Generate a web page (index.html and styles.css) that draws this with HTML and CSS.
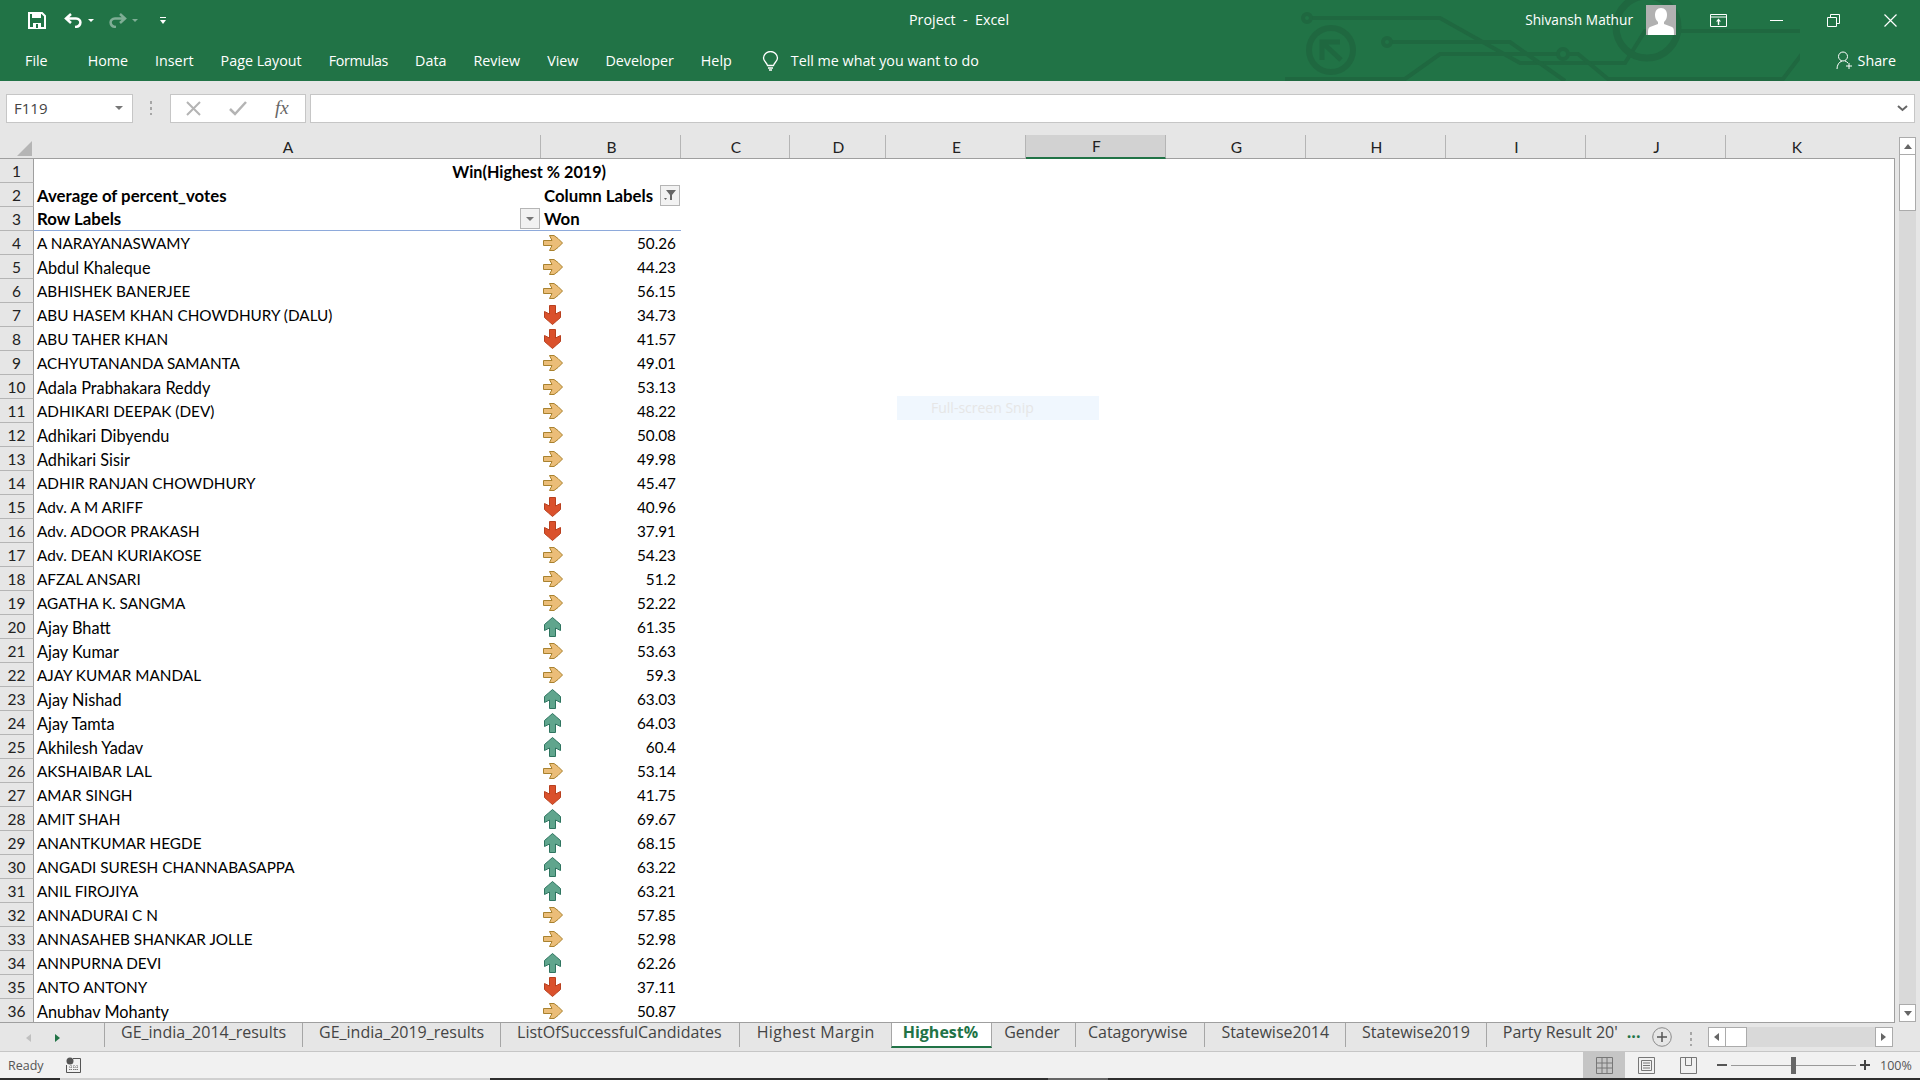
FILE: index.html
```html
<!DOCTYPE html>
<html lang="en">
<head>
    <meta charset="UTF-8">
    <title>Project - Excel</title>
    <link rel="stylesheet" href="styles.css">
</head>
<body>

<svg class="defs" width="0" height="0">
    <symbol id="arrowSide" viewBox="0 0 20 16">
        <path d="M.5 5.500H9L6.500 .5H11L15 3.500 19.500 8 15 12.500 11 15.500H6.500L9 10.500H.5z" fill="#ebbd78" stroke="#a9822f"/>
    </symbol>
    <symbol id="arrowDown" viewBox="0 0 17 20">
        <path d="M5.500 .5h6V9l5-2.500v6l-4 3.500-4 3.500-4-3.500-4-3.500v-6l5 2.500z" fill="#da512c" stroke="#b8401f"/>
    </symbol>
    <symbol id="arrowUp" viewBox="0 0 17 20">
        <path d="M5.500 19.500h6V11l5 2.500v-6l-4-3.500-4-3.500-4 3.500-4 3.500v6l5-2.500z" fill="#60a58d" stroke="#2f7560"/>
    </symbol>
</svg>

<header class="titlebar">
    <svg class="circuit" width="520" height="81" viewBox="1280 0 520 81" fill="none" stroke="#1f6840" stroke-width="4">
        <path d="M1310 18h130l80 45h105l20-32h155"/>
        <circle cx="1307" cy="18" r="4"/>
        <path d="M1390 42h120l55 39"/>
        <circle cx="1387" cy="42" r="4"/>
        <path d="M1560 54h-120l-35 25h-120"/>
        <circle cx="1563" cy="54" r="5"/>
        <path d="M1568 54h10l30 25h175l60-79"/>
        <circle cx="1331" cy="50" r="22" stroke-width="6"/>
        <path d="M1322 60V42h18M1323 43l18 17" stroke-width="5"/>
        <circle cx="1647" cy="27" r="31" stroke-width="7"/>
    </svg>
    <div class="titleRow">
        <div class="qat">
            <svg class="qatSave" width="18" height="17" viewBox="0 0 18 17"><path d="M1 1h13l3 3v12H1z" fill="none" stroke="#fff" stroke-width="2"/><path d="M4 1h9v5H4zM5 11h8v5H5z" fill="#fff"/><path d="M8 12h2v4H8z" fill="#217346"/></svg>
            <svg class="qatUndo" width="19" height="15" viewBox="0 0 19 15"><path d="M7 1L2 5.500 7 10M2 5.500h10c6 0 6 8-1 8.500" fill="none" stroke="#fff" stroke-width="2.500"/></svg>
            <span class="caret"></span>
            <svg class="qatRedo" width="19" height="15" viewBox="0 0 19 15"><path d="M12 1l5 4.500L12 10M17 5.500H7c-6 0-6 8 1 8.500" fill="none" stroke="#7fae95" stroke-width="2.500"/></svg>
            <span class="caret dim"></span>
            <svg class="qatMore" width="8" height="9" viewBox="0 0 8 9"><path d="M1 1h6v1H1zM1 4h6L4 8z" fill="#fff"/></svg>
        </div>
        <div class="docTitle">Project &nbsp;-&nbsp; Excel</div>
        <div class="account">
            <span class="userName">Shivansh Mathur</span>
            <svg class="avatar" width="30" height="30" viewBox="0 0 30 30"><path d="M0 0h30v30H0z" fill="#b1b1b1"/><path d="M15 3c4 0 6 3 6 7 0 3-1 5-3 7v2l8 3c2 1 2 3 2 8H2c0-5 0-7 2-8l8-3v-2c-2-2-3-4-3-7 0-4 2-7 6-7z" fill="#fff"/></svg>
            <svg class="winBtn winRibbon" width="17" height="13" viewBox="0 0 17 13"><path d="M.500.500h16v12H.500zM.500 3h16" fill="none" stroke="#fff"/><path d="M8.500 4.500L11 7.500H9.200V11H7.800V7.500H6z" fill="#fff"/></svg>
            <svg class="winBtn winMin" width="13" height="1" viewBox="0 0 13 1"><path d="M0 0h13v1H0z" fill="#fff"/></svg>
            <svg class="winBtn winRestore" width="13" height="13" viewBox="0 0 13 13"><path d="M.500 3.500h9v9h-9zM3.500 3.500v-3h9v9h-3" fill="none" stroke="#fff"/></svg>
            <svg class="winBtn winClose" width="13" height="13" viewBox="0 0 13 13"><path d="M.500.500l12 12M12.500.500l-12 12" fill="none" stroke="#fff" stroke-width="1.200"/></svg>
        </div>
    </div>
    <nav class="ribbonTabs">
        <span class="tabFile">File</span>
        <span>Home</span>
        <span>Insert</span>
        <span>Page Layout</span>
        <span class="tabFormulas">Formulas</span>
        <span>Data</span>
        <span>Review</span>
        <span>View</span>
        <span>Developer</span>
        <span>Help</span>
        <svg class="bulb" width="17" height="20" viewBox="0 0 17 20"><path d="M5.500 14.500C5 11.500 1.500 10.500 1.500 7a7 6.500 0 0 1 14 0c0 3.500-3.500 4.500-4 7.500zM6 17h5M7 19h3" fill="none" stroke="#fff" stroke-width="1.300"/></svg>
        <span class="tellMe">Tell me what you want to do</span>
        <span class="share">
            <svg width="17" height="19" viewBox="0 0 17 19"><path d="M7 1a4.500 4.500 0 0 1 0 9 4.500 4.500 0 0 1 0-9zM1 18c0-4 2-7 5-8M9 10c1 .3 2 1 3 2M13 12v6M10 15h6" fill="none" stroke="#fff"/></svg>
            Share
        </span>
    </nav>
</header>

<section class="formulaBar">
    <div class="nameBox">F119<span class="smallCaret"></span></div>
    <div class="grip"></div>
    <div class="fxBox">
        <svg width="15" height="15" viewBox="0 0 15 15"><path d="M1 1l13 13M14 1L1 14" fill="none" stroke="#b4b4b4" stroke-width="2"/></svg>
        <svg width="18" height="15" viewBox="0 0 18 15"><path d="M1 8l5 5L17 1" fill="none" stroke="#b4b4b4" stroke-width="2.500"/></svg>
        <span class="fxText">fx</span>
    </div>
    <div class="formulaInput">
        <svg width="11" height="7" viewBox="0 0 11 7"><path d="M1 1l4.500 4L10 1" fill="none" stroke="#666" stroke-width="2"/></svg>
    </div>
</section>

<div class="gridArea">
    <div class="gridLeft">
        <section class="columnHeads">
            <div class="corner"><svg width="15" height="15" viewBox="0 0 15 15"><path d="M15 0v15H0z" fill="#b5b5b5"/></svg></div>
            <div>A</div><div>B</div><div>C</div><div>D</div><div>E</div>
            <div class="selected">F</div>
            <div>G</div><div>H</div><div>I</div><div>J</div><div>K</div>
        </section>

        <main class="sheet">
            <div class="row"><div class="rowNo">1</div><div class="cell merged bold">Win(Highest % 2019)</div></div>
            <div class="row"><div class="rowNo">2</div><div class="cell bold">Average of percent_votes</div><div class="cell bold colLabels">Column Labels<span class="pivotBtn"><svg width="12" height="12" viewBox="0 0 12 12"><path d="M2 1h10L8 6v5H6V6z" fill="#666"/><path d="M0 9h3l-1.500 2z" fill="#666"/></svg></span></div></div>
            <div class="row headRow"><div class="rowNo">3</div><div class="cell bold rowLabels">Row Labels<span class="pivotBtn"><span class="smallCaret"></span></span></div><div class="cell bold">Won</div></div>

            <div class="row"><div class="rowNo">4</div><div class="cell">A NARAYANASWAMY</div><div class="cell val"><svg class="ar"><use href="#arrowSide"/></svg>50.26</div></div>
            <div class="row"><div class="rowNo">5</div><div class="cell lc">Abdul Khaleque</div><div class="cell val"><svg class="ar"><use href="#arrowSide"/></svg>44.23</div></div>
            <div class="row"><div class="rowNo">6</div><div class="cell">ABHISHEK BANERJEE</div><div class="cell val"><svg class="ar"><use href="#arrowSide"/></svg>56.15</div></div>
            <div class="row"><div class="rowNo">7</div><div class="cell">ABU HASEM KHAN CHOWDHURY (DALU)</div><div class="cell val"><svg class="ar vert"><use href="#arrowDown"/></svg>34.73</div></div>
            <div class="row"><div class="rowNo">8</div><div class="cell">ABU TAHER KHAN</div><div class="cell val"><svg class="ar vert"><use href="#arrowDown"/></svg>41.57</div></div>
            <div class="row"><div class="rowNo">9</div><div class="cell">ACHYUTANANDA SAMANTA</div><div class="cell val"><svg class="ar"><use href="#arrowSide"/></svg>49.01</div></div>
            <div class="row"><div class="rowNo">10</div><div class="cell lc">Adala Prabhakara Reddy</div><div class="cell val"><svg class="ar"><use href="#arrowSide"/></svg>53.13</div></div>
            <div class="row"><div class="rowNo">11</div><div class="cell">ADHIKARI DEEPAK (DEV)</div><div class="cell val"><svg class="ar"><use href="#arrowSide"/></svg>48.22</div></div>
            <div class="row"><div class="rowNo">12</div><div class="cell lc">Adhikari Dibyendu</div><div class="cell val"><svg class="ar"><use href="#arrowSide"/></svg>50.08</div></div>
            <div class="row"><div class="rowNo">13</div><div class="cell lc">Adhikari Sisir</div><div class="cell val"><svg class="ar"><use href="#arrowSide"/></svg>49.98</div></div>
            <div class="row"><div class="rowNo">14</div><div class="cell">ADHIR RANJAN CHOWDHURY</div><div class="cell val"><svg class="ar"><use href="#arrowSide"/></svg>45.47</div></div>
            <div class="row"><div class="rowNo">15</div><div class="cell">Adv. A M ARIFF</div><div class="cell val"><svg class="ar vert"><use href="#arrowDown"/></svg>40.96</div></div>
            <div class="row"><div class="rowNo">16</div><div class="cell">Adv. ADOOR PRAKASH</div><div class="cell val"><svg class="ar vert"><use href="#arrowDown"/></svg>37.91</div></div>
            <div class="row"><div class="rowNo">17</div><div class="cell">Adv. DEAN KURIAKOSE</div><div class="cell val"><svg class="ar"><use href="#arrowSide"/></svg>54.23</div></div>
            <div class="row"><div class="rowNo">18</div><div class="cell">AFZAL ANSARI</div><div class="cell val"><svg class="ar"><use href="#arrowSide"/></svg>51.2</div></div>
            <div class="row"><div class="rowNo">19</div><div class="cell">AGATHA K. SANGMA</div><div class="cell val"><svg class="ar"><use href="#arrowSide"/></svg>52.22</div></div>
            <div class="row"><div class="rowNo">20</div><div class="cell lc">Ajay Bhatt</div><div class="cell val"><svg class="ar vert"><use href="#arrowUp"/></svg>61.35</div></div>
            <div class="row"><div class="rowNo">21</div><div class="cell lc">Ajay Kumar</div><div class="cell val"><svg class="ar"><use href="#arrowSide"/></svg>53.63</div></div>
            <div class="row"><div class="rowNo">22</div><div class="cell">AJAY KUMAR MANDAL</div><div class="cell val"><svg class="ar"><use href="#arrowSide"/></svg>59.3</div></div>
            <div class="row"><div class="rowNo">23</div><div class="cell lc">Ajay Nishad</div><div class="cell val"><svg class="ar vert"><use href="#arrowUp"/></svg>63.03</div></div>
            <div class="row"><div class="rowNo">24</div><div class="cell lc">Ajay Tamta</div><div class="cell val"><svg class="ar vert"><use href="#arrowUp"/></svg>64.03</div></div>
            <div class="row"><div class="rowNo">25</div><div class="cell lc">Akhilesh Yadav</div><div class="cell val"><svg class="ar vert"><use href="#arrowUp"/></svg>60.4</div></div>
            <div class="row"><div class="rowNo">26</div><div class="cell">AKSHAIBAR LAL</div><div class="cell val"><svg class="ar"><use href="#arrowSide"/></svg>53.14</div></div>
            <div class="row"><div class="rowNo">27</div><div class="cell">AMAR SINGH</div><div class="cell val"><svg class="ar vert"><use href="#arrowDown"/></svg>41.75</div></div>
            <div class="row"><div class="rowNo">28</div><div class="cell">AMIT SHAH</div><div class="cell val"><svg class="ar vert"><use href="#arrowUp"/></svg>69.67</div></div>
            <div class="row"><div class="rowNo">29</div><div class="cell">ANANTKUMAR HEGDE</div><div class="cell val"><svg class="ar vert"><use href="#arrowUp"/></svg>68.15</div></div>
            <div class="row"><div class="rowNo">30</div><div class="cell">ANGADI SURESH CHANNABASAPPA</div><div class="cell val"><svg class="ar vert"><use href="#arrowUp"/></svg>63.22</div></div>
            <div class="row"><div class="rowNo">31</div><div class="cell">ANIL FIROJIYA</div><div class="cell val"><svg class="ar vert"><use href="#arrowUp"/></svg>63.21</div></div>
            <div class="row"><div class="rowNo">32</div><div class="cell">ANNADURAI C N</div><div class="cell val"><svg class="ar"><use href="#arrowSide"/></svg>57.85</div></div>
            <div class="row"><div class="rowNo">33</div><div class="cell">ANNASAHEB SHANKAR JOLLE</div><div class="cell val"><svg class="ar"><use href="#arrowSide"/></svg>52.98</div></div>
            <div class="row"><div class="rowNo">34</div><div class="cell">ANNPURNA DEVI</div><div class="cell val"><svg class="ar vert"><use href="#arrowUp"/></svg>62.26</div></div>
            <div class="row"><div class="rowNo">35</div><div class="cell">ANTO ANTONY</div><div class="cell val"><svg class="ar vert"><use href="#arrowDown"/></svg>37.11</div></div>
            <div class="row"><div class="rowNo">36</div><div class="cell lc">Anubhav Mohanty</div><div class="cell val"><svg class="ar"><use href="#arrowSide"/></svg>50.87</div></div>

            <div class="snipHint">Full-screen Snip</div>
        </main>
    </div>
    <aside class="vScroll">
        <div class="scrollBtn"><span class="triUp"></span></div>
        <div class="vThumb"></div>
        <div class="scrollBtn pushDown"><span class="triDown"></span></div>
    </aside>
</div>

<section class="tabsBar">
    <div class="tabNav"><span class="triLeft dim"></span><span class="triRight green"></span></div>
    <div class="sheetTab">GE_india_2014_results</div>
    <div class="sheetTab">GE_india_2019_results</div>
    <div class="sheetTab tabList">ListOfSuccessfulCandidates</div>
    <div class="sheetTab tabMargin">Highest Margin</div>
    <div class="sheetTab active">Highest%</div>
    <div class="sheetTab tabGender">Gender</div>
    <div class="sheetTab tabCategory">Catagorywise</div>
    <div class="sheetTab">Statewise2014</div>
    <div class="sheetTab">Statewise2019</div>
    <div class="sheetTab partyTab">Party Result 20'</div>
    <div class="moreTabs">...</div>
    <svg class="addSheet" width="20" height="20" viewBox="0 0 20 20"><circle cx="10" cy="10" r="9.300" fill="none" stroke="#8a8a8a"/><path d="M10 5v10M5 10h10" stroke="#555" stroke-width="1.500"/></svg>
    <div class="grip tabGrip"></div>
    <div class="hScroll">
        <div class="scrollBtn"><span class="triLeft"></span></div>
        <div class="hThumb"></div>
        <div class="scrollBtn pushRight"><span class="triRight"></span></div>
    </div>
</section>

<footer class="statusBar">
    <span class="ready">Ready</span>
    <svg class="macroIcon" width="15" height="16" viewBox="0 0 15 16"><circle cx="4" cy="4" r="3.500" fill="#555"/><path d="M7 1.500h7.500v14H.500V8" fill="none" stroke="#555"/><path d="M3 10h9M3 12.500h9M5 8v6M8 8v6M11 8v6" stroke="#777" stroke-dasharray="1 1"/></svg>
    <div class="viewBtns">
        <div class="viewBtn on"><svg width="17" height="17" viewBox="0 0 17 17"><path d="M.500.500h16v16H.500zM.500 6h16M.500 11h16M6 .500v16M11 .500v16" fill="none" stroke="#777"/></svg></div>
        <div class="viewBtn"><svg width="17" height="17" viewBox="0 0 17 17"><path d="M.500.500h16v16H.500z" fill="none" stroke="#777"/><path d="M3.500 3.500h10v10h-10zM5 6h7M5 8.500h7M5 11h7" fill="none" stroke="#777"/></svg></div>
        <div class="viewBtn"><svg width="17" height="17" viewBox="0 0 17 17"><path d="M.500.500h16v16H.500zM5.500.500v8h6v-8" fill="none" stroke="#777"/></svg></div>
    </div>
    <div class="zoomSlider">
        <span class="zoomMinus"></span>
        <div class="zoomTrack"><span class="zoomThumb"></span></div>
        <span class="zoomPlus"></span>
    </div>
    <span class="zoomPct">100%</span>
</footer>
<div class="bottomStrip"><span class="lite"></span><span class="mid"></span></div>

</body>
</html>
```

FILE: styles.css
```css
* {
    box-sizing: border-box;
}

body {
    margin: 0;
    width: 1920px;
    height: 1080px;
    overflow: hidden;
    font-family: "Open Sans", "Noto Sans", sans-serif;
    font-size: 14.3px;
    color: #222;
    background: #fff;
}

.defs {
    position: absolute;
}

/* title bar + ribbon tabs */
.titlebar {
    position: relative;
    height: 81px;
    background: #217346;
    color: #fff;
}

.circuit {
    position: absolute;
    left: 1280px;
    top: 0;
}

.titleRow {
    position: relative;
    display: grid;
    grid-template-columns: 1fr auto 1fr;
    height: 40px;
    align-items: center;
}

.qat {
    display: flex;
    align-items: center;
    padding-left: 28px;
}

.qatUndo {
    margin-left: 18px;
}

.caret {
    margin-left: 5px;
    border-left: 3px solid transparent;
    border-right: 3px solid transparent;
    border-top: 3px solid #fff;
}

.caret.dim {
    border-top-color: #7fae95;
}

.qatRedo {
    margin-left: 14px;
}

.qatMore {
    margin-left: 21px;
}

.docTitle {
    margin: 0 2px 2px 0;
}

.account {
    display: flex;
    align-items: center;
    justify-content: flex-end;
}

.userName {
    margin: 0 13px 2px 0;
    font-size: 13.7px;
}

.winRibbon {
    margin-left: 34px;
}

.winMin {
    margin-left: 43px;
}

.winRestore {
    margin-left: 44px;
}

.winClose {
    margin-left: 44px;
    margin-right: 23px;
}

.ribbonTabs {
    position: relative;
    display: flex;
    align-items: center;
    height: 41px;
    padding-left: 25px;
    gap: 27px;
}

.tabFile {
    margin-right: 13px;
}

.tabFormulas {
    letter-spacing: -0.35px;
}

.bulb {
    margin-left: 3px;
    margin-right: -15px;
}

.share {
    display: flex;
    align-items: center;
    gap: 5px;
    margin-left: auto;
    margin-right: 24px;
}

/* formula bar */
.formulaBar {
    display: flex;
    align-items: center;
    height: 54px;
    padding: 0 5px 0 6px;
    background: #e6e6e6;
}

.nameBox {
    display: flex;
    align-items: center;
    justify-content: space-between;
    width: 127px;
    height: 29px;
    padding: 0 9px 0 7px;
    background: #fff;
    border: 1px solid #c6c6c6;
    font-size: 15px;
    color: #444;
}

.smallCaret {
    display: block;
    border-left: 4px solid transparent;
    border-right: 4px solid transparent;
    border-top: 4px solid #777;
}

.grip {
    width: 2px;
    height: 14px;
    margin: 0 18px 0 17px;
    background: repeating-linear-gradient(#a6a6a6 0 3px, transparent 3px 6px);
}

.fxBox {
    display: flex;
    align-items: center;
    gap: 28px;
    width: 136px;
    height: 29px;
    padding-left: 15px;
    background: #fff;
    border: 1px solid #c6c6c6;
}

.fxText {
    font-family: "Liberation Serif", serif;
    font-style: italic;
    font-size: 19px;
    color: #666;
}

.formulaInput {
    flex: 1;
    display: flex;
    align-items: center;
    justify-content: flex-end;
    height: 29px;
    margin-left: 4px;
    padding-right: 6px;
    background: #fff;
    border: 1px solid #c6c6c6;
}

/* grid area: headers + sheet on the left, scrollbar right */
.gridArea {
    display: flex;
    height: 888px;
}

.gridLeft {
    width: 1895px;
}

.columnHeads {
    display: grid;
    grid-template-columns: 34px 507px 140px 109px 96px 140px 140px 140px 140px 140px 140px 140px 1fr;
    height: 24px;
    background: #e6e6e6;
    border-bottom: 1px solid #9f9f9f;
    font-family: Lato, sans-serif;
    font-size: 15.5px;
}

.columnHeads > div {
    display: flex;
    align-items: center;
    justify-content: center;
    padding-left: 2px;
    border-right: 1px solid #b5b5b5;
}

.columnHeads .corner {
    justify-content: flex-end;
    align-items: flex-end;
    padding: 0 2px 2px 0;
    border-right: 0;
}

.columnHeads > div:last-child {
    border-right: 0;
}

.columnHeads .selected {
    background: #d2d2d2;
    border-bottom: 2px solid #217346;
    margin-bottom: -1px;
}

.sheet {
    position: relative;
    height: 864px;
    border-right: 1px solid #9f9f9f;
    border-bottom: 1px solid #9f9f9f;
    font-family: Lato, sans-serif;
    font-size: 15.3px;
    color: #000;
    overflow: hidden;
}

.row {
    display: grid;
    grid-template-columns: 34px 507px 140px;
    height: 24px;
    align-items: center;
}

.rowNo {
    display: flex;
    align-items: center;
    justify-content: center;
    height: 24px;
    background: #e6e6e6;
    border-right: 1px solid #9f9f9f;
    border-bottom: 1px solid #b5b5b5;
    color: #222;
    font-size: 15.5px;
}

.cell {
    position: relative;
    display: flex;
    align-items: center;
    height: 24px;
    padding: 0 4px 0 3px;
    white-space: nowrap;
}

.lc {
    font-size: 16.3px;
}

.bold {
    font-weight: 700;
    font-size: 16.8px;
}

.merged {
    grid-column: 2 / 4;
    justify-content: flex-end;
    padding-right: 75px;
    font-size: 16.2px;
}

.headRow .cell {
    border-bottom: 1px solid #8eaadb;
}

.colLabels,
.rowLabels {
    justify-content: space-between;
    padding-right: 1px;
}

.pivotBtn {
    display: flex;
    align-items: center;
    justify-content: center;
    width: 20px;
    height: 21px;
    background: #f2f2f2;
    border: 1px solid #b5b5b5;
}

.val {
    justify-content: flex-end;
    padding-right: 5px;
}

.ar {
    position: absolute;
    left: 2px;
    top: 4px;
    width: 20px;
    height: 16px;
}

.ar.vert {
    left: 3px;
    top: 2px;
    width: 17px;
    height: 20px;
}

.snipHint {
    position: absolute;
    left: 897px;
    top: 237px;
    width: 202px;
    height: 24px;
    padding-left: 34px;
    background: #f0f7fe;
    color: #e6e6e6;
    font-family: "Open Sans", sans-serif;
    font-size: 14px;
    line-height: 24px;
}

/* scrollbars */
.vScroll {
    flex: 1;
    display: flex;
    flex-direction: column;
    border: solid #e6e6e6;
    border-width: 2px 4px 1px 4px;
    background: #d9d9d9;
}

.scrollBtn {
    display: flex;
    align-items: center;
    justify-content: center;
    flex: 0 0 18px;
    background: #fff;
    border: 1px solid #ababab;
}

.vThumb {
    height: 56px;
    background: #fff;
    border: 1px solid #ababab;
    border-top: 0;
}

.pushDown {
    margin-top: auto;
}

.triUp,
.triDown,
.triLeft,
.triRight {
    display: block;
    border: 4px solid transparent;
}

.triUp {
    border-bottom: 5px solid #666;
    border-top: 0;
}

.triDown {
    border-top: 5px solid #666;
    border-bottom: 0;
}

.triLeft {
    border-right: 5px solid #666;
    border-left: 0;
}

.triRight {
    border-left: 5px solid #666;
    border-right: 0;
}

/* sheet tabs */
.tabsBar {
    display: flex;
    align-items: flex-start;
    height: 29px;
    background: #e6e6e6;
    border-bottom: 1px solid #c6c6c6;
    font-size: 16px;
    color: #444;
}

.tabNav {
    display: flex;
    align-items: center;
    gap: 24px;
    width: 104px;
    height: 24px;
    padding: 5px 0 0 26px;
}

.triLeft.dim {
    border-right-color: #c0c0c0;
}

.triRight.green {
    border-left-color: #217346;
}

.sheetTab {
    height: 24px;
    padding: 0 16px;
    line-height: 19px;
    border-left: 1px solid #a6a6a6;
    white-space: nowrap;
}

.tabList {
    padding-right: 17px;
}

.tabMargin {
    padding-left: 17px;
    letter-spacing: 0.35px;
}

.sheetTab.active {
    height: 26px;
    padding: 0 13px 0 11px;
    margin-top: -1px;
    background: #fff;
    border: 1px solid #a6a6a6;
    border-top-color: #9f9f9f;
    border-bottom: 2px solid #217346;
    color: #217346;
    font-weight: 700;
}

.sheetTab.active + .sheetTab {
    border-left: 0;
}

.tabGender {
    padding: 0 15px 0 12px;
}

.tabCategory {
    padding: 0 17px 0 12px;
}

.partyTab {
    width: 141px;
    padding-right: 0;
}

.moreTabs {
    width: 25px;
    color: #217346;
    font-weight: 700;
    line-height: 19px;
}

.addSheet {
    margin-top: 4px;
}

.tabGrip {
    margin: 9px 16px 0 18px;
}

.hScroll {
    display: flex;
    width: 185px;
    height: 20px;
    margin-top: 4px;
    background: #d9d9d9;
}

.hThumb {
    width: 21px;
    background: #fff;
    border: 1px solid #ababab;
    border-left: 0;
}

.pushRight {
    margin-left: auto;
}

/* status bar */
.statusBar {
    display: flex;
    align-items: center;
    height: 26px;
    background: #f1f1f1;
    padding-left: 8px;
    font-size: 12.5px;
    color: #555;
}

.macroIcon {
    margin-left: 22px;
}

.viewBtns {
    display: flex;
    margin-left: auto;
    margin-right: 8px;
}

.viewBtn {
    display: flex;
    align-items: center;
    justify-content: center;
    width: 42px;
    height: 26px;
}

.viewBtn.on {
    background: #c5c5c5;
}

.zoomSlider {
    display: flex;
    align-items: center;
    width: 155px;
}

.zoomMinus {
    width: 10px;
    height: 2px;
    background: #555;
}

.zoomTrack {
    position: relative;
    width: 125px;
    height: 1px;
    margin: 0 4px;
    background: #999;
}

.zoomThumb {
    position: absolute;
    left: 60px;
    top: -8px;
    width: 5px;
    height: 17px;
    background: #666;
}

.zoomPlus {
    width: 10px;
    height: 10px;
    background: linear-gradient(#444, #444) center / 10px 2px no-repeat, linear-gradient(#444, #444) center / 2px 10px no-repeat;
}

.zoomPct {
    width: 40px;
    margin-left: 8px;
    padding-right: 8px;
    white-space: nowrap;
}

.bottomStrip {
    display: flex;
    height: 2px;
    background: #2e2e2e;
}

.lite {
    width: 430px;
    margin-left: 60px;
    background: #d0d0d0;
}

.mid {
    width: 60px;
    margin-left: 558px;
    background: #666;
}
```
